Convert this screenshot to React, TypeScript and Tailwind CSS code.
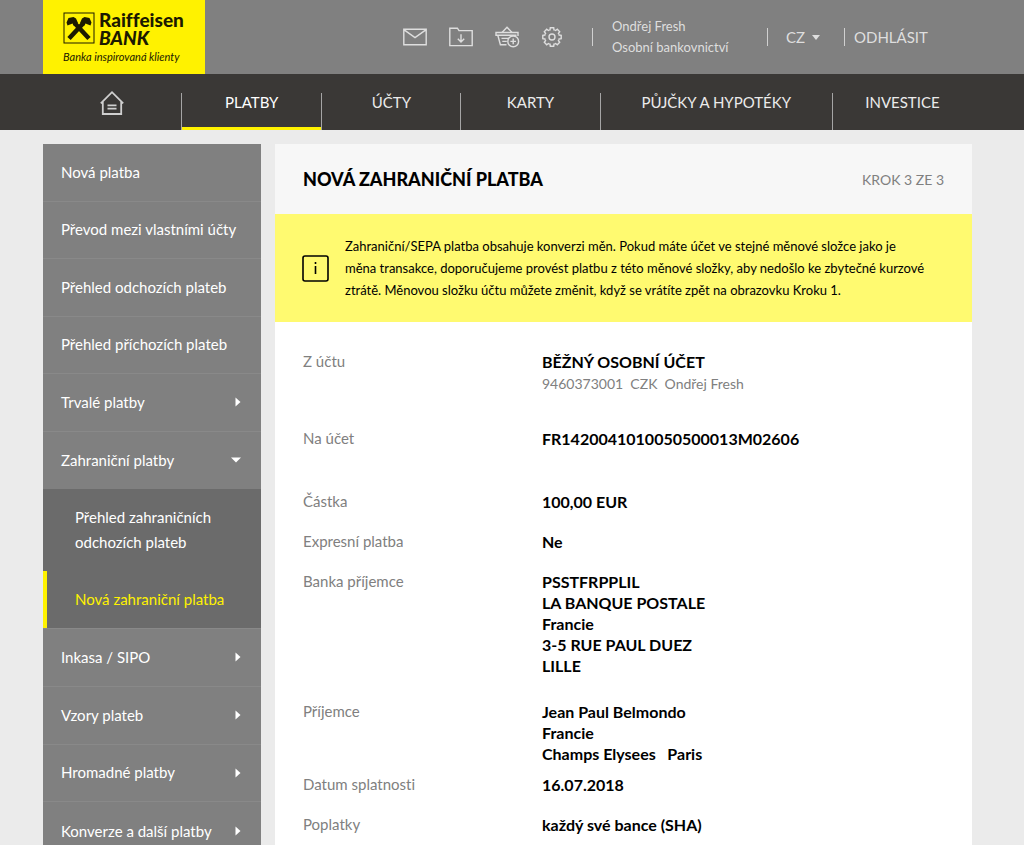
import React from 'react';
import { clsx } from 'clsx';

interface MenuItem {
  label: string;
  arrow?: 'right' | 'down';
}

interface DetailRow {
  label: string;
  lines: string[];
  note?: string;
  spacing: string;
}

const NAV_ITEMS = ['PLATBY', 'ÚČTY', 'KARTY', 'PŮJČKY A HYPOTÉKY', 'INVESTICE'];

const MENU_TOP: MenuItem[] = [
  { label: 'Nová platba' },
  { label: 'Převod mezi vlastními účty' },
  { label: 'Přehled odchozích plateb' },
  { label: 'Přehled příchozích plateb' },
  { label: 'Trvalé platby', arrow: 'right' },
  { label: 'Zahraniční platby', arrow: 'down' },
];

const MENU_BOTTOM: MenuItem[] = [
  { label: 'Inkasa / SIPO', arrow: 'right' },
  { label: 'Vzory plateb', arrow: 'right' },
  { label: 'Hromadné platby', arrow: 'right' },
  { label: 'Konverze a další platby', arrow: 'right' },
];

const DETAILS: DetailRow[] = [
  { label: 'Z účtu', lines: ['BĚŽNÝ OSOBNÍ ÚČET'], note: '9460373001  CZK  Ondřej Fresh', spacing: 'pb-8' },
  { label: 'Na účet', lines: ['FR1420041010050500013M02606'], spacing: 'pb-[42px]' },
  { label: 'Částka', lines: ['100,00 EUR'], spacing: 'pb-[19px]' },
  { label: 'Expresní platba', lines: ['Ne'], spacing: 'pb-[19px]' },
  {
    label: 'Banka příjemce',
    lines: ['PSSTFRPPLIL', 'LA BANQUE POSTALE', 'Francie', '3-5 RUE PAUL DUEZ', 'LILLE'],
    spacing: 'pb-[25px]',
  },
  { label: 'Příjemce', lines: ['Jean Paul Belmondo', 'Francie', 'Champs Elysees   Paris'], spacing: 'pb-[10px]' },
  { label: 'Datum splatnosti', lines: ['16.07.2018'], spacing: 'pb-[19px]' },
  { label: 'Poplatky', lines: ['každý své bance (SHA)'], spacing: 'pb-[19px]' },
];

function Logo() {
  return (
    <a href="#" className="flex h-[74px] w-[162px] flex-col bg-[#fff200] pt-3 pl-5 text-[#1c1a00]">
      <span className="flex gap-1">
        <svg className="h-8 w-8 shrink-0" viewBox="0 0 32 32" fill="none">
          <rect x="1" y="1" width="30" height="30" stroke="currentColor" strokeWidth="1" />
          <path d="M6 26.5L20.5 11M26 26.5L11.5 11" stroke="currentColor" strokeWidth="4.6" />
          <path
            d="M17 11L19 6.5L21.500 5L26.500 6L28.500 10.500L27.500 13.500L25 12.500L22.500 11.500L21 14ZM15 11L13 6.500L10.500 5L5.500 6L3.500 10.500L4.500 13.500L7 12.500L9.500 11.500L11 14Z"
            fill="currentColor"
          />
        </svg>
        <span className="flex flex-col text-[19px] leading-4 font-black">
          <span>Raiffeisen</span>
          <i className="pt-0.5">BANK</i>
        </span>
      </span>
      <span className="mt-0.5 text-[11px] leading-[18px] whitespace-nowrap italic">Banka inspirovaná klienty</span>
    </a>
  );
}

function MailIcon() {
  return (
    <svg width="24" height="18" viewBox="0 0 24 18" fill="none" stroke="currentColor" strokeWidth="1.4">
      <path d="M0.8 1.2H23.2V16.8H0.8ZM0.8 1.6L12 9.6L23.2 1.6" />
    </svg>
  );
}

function FolderIcon() {
  return (
    <svg width="24" height="20" viewBox="0 0 24 20" fill="none" stroke="currentColor" strokeWidth="1.4">
      <path d="M0.8 18.6V1.2H8.4L10 3.6H23.2V18.6Z" />
      <path d="M12 7.2V15M8.8 11.8L12 15L15.2 11.8" />
    </svg>
  );
}

function BasketIcon() {
  return (
    <svg width="25" height="22" viewBox="0 0 25 22" fill="none" stroke="currentColor" strokeWidth="1.4">
      <path d="M7 6.5L12 1.2L17 6.5" />
      <path d="M23 10V6.5H1V9.3H21.5M2.8 9.3L5.4 18.8H11.5M6.5 12.4H14M7.3 15.4H11.8" />
      <circle cx="18.2" cy="15.4" r="5.4" />
      <path d="M18.2 12.6V18.2M15.4 15.4H21" />
    </svg>
  );
}

function GearIcon() {
  const teeth = [0, 45, 90, 135, 180, 225, 270, 315];
  return (
    <svg width="20" height="20" viewBox="-10 -10 20 20" fill="none" stroke="currentColor" strokeWidth="1.4">
      {teeth.map(angle => (
        <path key={angle} transform={`rotate(${angle})`} d="M-2.800 -6.800L-2 -7.100L-1.700 -9.200H1.700L2 -7.100L2.800 -6.800" />
      ))}
      <circle r="3" />
    </svg>
  );
}

function Arrow({ direction }: { direction: 'right' | 'down' }) {
  return direction === 'right' ? (
    <svg className="mr-5" width="6" height="10" viewBox="0 0 6 10" fill="currentColor">
      <path d="M0.5 0.5L5.5 5L0.5 9.5Z" />
    </svg>
  ) : (
    <svg className="mr-5" width="10" height="6" viewBox="0 0 10 6" fill="currentColor">
      <path d="M0 0.5H10L5 5.5Z" />
    </svg>
  );
}

function Separator() {
  return <span className="h-[18px] w-px shrink-0 bg-[#d0d0d0]" />;
}

function Header() {
  return (
    <header className="flex items-center bg-[#808080] pr-[99px] pl-[43px] text-[#dedede]">
      <Logo />
      <div className="ml-auto flex items-center gap-[22px]">
        <button aria-label="Zprávy"><MailIcon /></button>
        <button aria-label="Dokumenty"><FolderIcon /></button>
        <button aria-label="Košík"><BasketIcon /></button>
        <button aria-label="Nastavení"><GearIcon /></button>
      </div>
      <div className="ml-[30px] flex items-center">
        <Separator />
        <p className="w-[174px] pl-[19px] text-[13px] leading-[21px]">
          Ondřej Fresh
          <br />
          Osobní bankovnictví
        </p>
        <Separator />
        <button className="flex w-[76px] items-center gap-[7px] pl-[18px] text-[15px]">
          CZ
          <svg width="8" height="5" viewBox="0 0 8 5" fill="currentColor">
            <path d="M0 0H8L4 5Z" />
          </svg>
        </button>
        <Separator />
        <a href="#" className="ml-[9px] w-[71px] text-[15px] whitespace-nowrap">ODHLÁSIT</a>
      </div>
    </header>
  );
}

function MainNav() {
  return (
    <nav className="bg-[#3a3836] pr-[52px] pl-[43px] text-[15px] leading-[18px] text-[#ebebeb]">
      <div className="grid h-14 grid-cols-[138fr_140fr_139fr_139fr_232fr_140fr] items-end">
        <a href="#" aria-label="Domů" className="flex h-10 justify-center">
          <svg width="24" height="26" viewBox="0 0 24 26" fill="none" stroke="#cfcfcf" strokeWidth="1.8">
            <path d="M0.800 13.300L12 2.200L23.200 13.300M2.800 11.500V24H21.200V11.500M7.500 15.400H16.500M7.500 18.600H16.500" />
          </svg>
        </a>
        {NAV_ITEMS.map((item, i) => (
          <a
            key={item}
            href="#"
            className={clsx(
              'h-[37px] border-l border-[#a5a5a5] text-center whitespace-nowrap',
              i === 0 && 'text-white'
            )}
          >
            <span className={clsx('block h-full', i === 0 && 'border-b-3 border-[#fff200]')}>{item}</span>
          </a>
        ))}
      </div>
    </nav>
  );
}

function MenuGroup({ items, className }: { items: MenuItem[]; className: string }) {
  return (
    <ul className={clsx('grid auto-rows-fr', className)}>
      {items.map(item => (
        <li key={item.label} className="flex border-b border-[#898989] last:border-b-0">
          <a href="#" className="flex flex-1 items-center justify-between pl-[18px] whitespace-nowrap">
            {item.label}
            {item.arrow && <Arrow direction={item.arrow} />}
          </a>
        </li>
      ))}
    </ul>
  );
}

function Sidebar() {
  return (
    <aside className="w-[218px] shrink-0 bg-[#808080] text-[15px] leading-[25px] text-white">
      <MenuGroup items={MENU_TOP} className="min-h-[345px]" />
      <ul className="border-b border-[#898989] bg-[#6b6b6b]">
        <li>
          <a href="#" className="block py-4 pr-9 pl-8">
            Přehled zahraničních odchozích plateb
          </a>
        </li>
        <li>
          <a href="#" className="block border-l-4 border-[#fff200] py-4 pl-7 whitespace-nowrap text-[#fff200]">
            Nová zahraniční platba
          </a>
        </li>
      </ul>
      <MenuGroup items={MENU_BOTTOM} className="min-h-[231px]" />
    </aside>
  );
}

function Notice() {
  return (
    <div className="flex items-center gap-4 bg-[#fffa70] py-[21px] pr-7 pl-[27px] text-black">
      <svg className="shrink-0" width="27" height="27" viewBox="0 0 27 27" fill="none" stroke="currentColor" strokeWidth="1.6">
        <rect x="1" y="1" width="25" height="25" rx="2" />
        <path d="M13.5 11V19M13.5 7V9" />
      </svg>
      <p className="text-[13px] leading-[22px]">
        Zahraniční/SEPA platba obsahuje konverzi měn. Pokud máte účet ve stejné měnové složce jako je
        <br />
        měna transakce, doporučujeme provést platbu z této měnové složky, aby nedošlo ke zbytečné kurzové
        <br />
        ztrátě. Měnovou složku účtu můžete změnit, když se vrátíte zpět na obrazovku Kroku 1.
      </p>
    </div>
  );
}

function PaymentDetail() {
  return (
    <main className="min-w-0 flex-1 bg-white">
      <div className="flex h-[70px] items-center justify-between bg-[#f7f7f7] px-7">
        <h1 className="text-[18px] font-black text-black">NOVÁ ZAHRANIČNÍ PLATBA</h1>
        <span className="text-[14px] text-[#808080]">KROK 3 ZE 3</span>
      </div>
      <Notice />
      <dl className="px-7 pt-[29px] text-[15px] leading-[21px]">
        {DETAILS.map(row => (
          <div key={row.label} className={clsx('flex', row.spacing)}>
            <dt className="w-[239px] shrink-0 text-[#808080]">{row.label}</dt>
            <dd className="text-[16px] font-bold whitespace-pre text-black">
              {row.lines.map(line => (
                <div key={line}>{line}</div>
              ))}
              {row.note && <div className="text-[14px] leading-6 font-normal text-[#808080]">{row.note}</div>}
            </dd>
          </div>
        ))}
      </dl>
    </main>
  );
}

export default function App() {
  return (
    <div className="min-h-screen bg-[#ebebeb] font-['Lato','Liberation_Sans',sans-serif] [font-variant-ligatures:none]">
      <Header />
      <MainNav />
      <div className="flex gap-3.5 pt-3.5 pr-[52px] pl-[43px]">
        <Sidebar />
        <PaymentDetail />
      </div>
    </div>
  );
}
